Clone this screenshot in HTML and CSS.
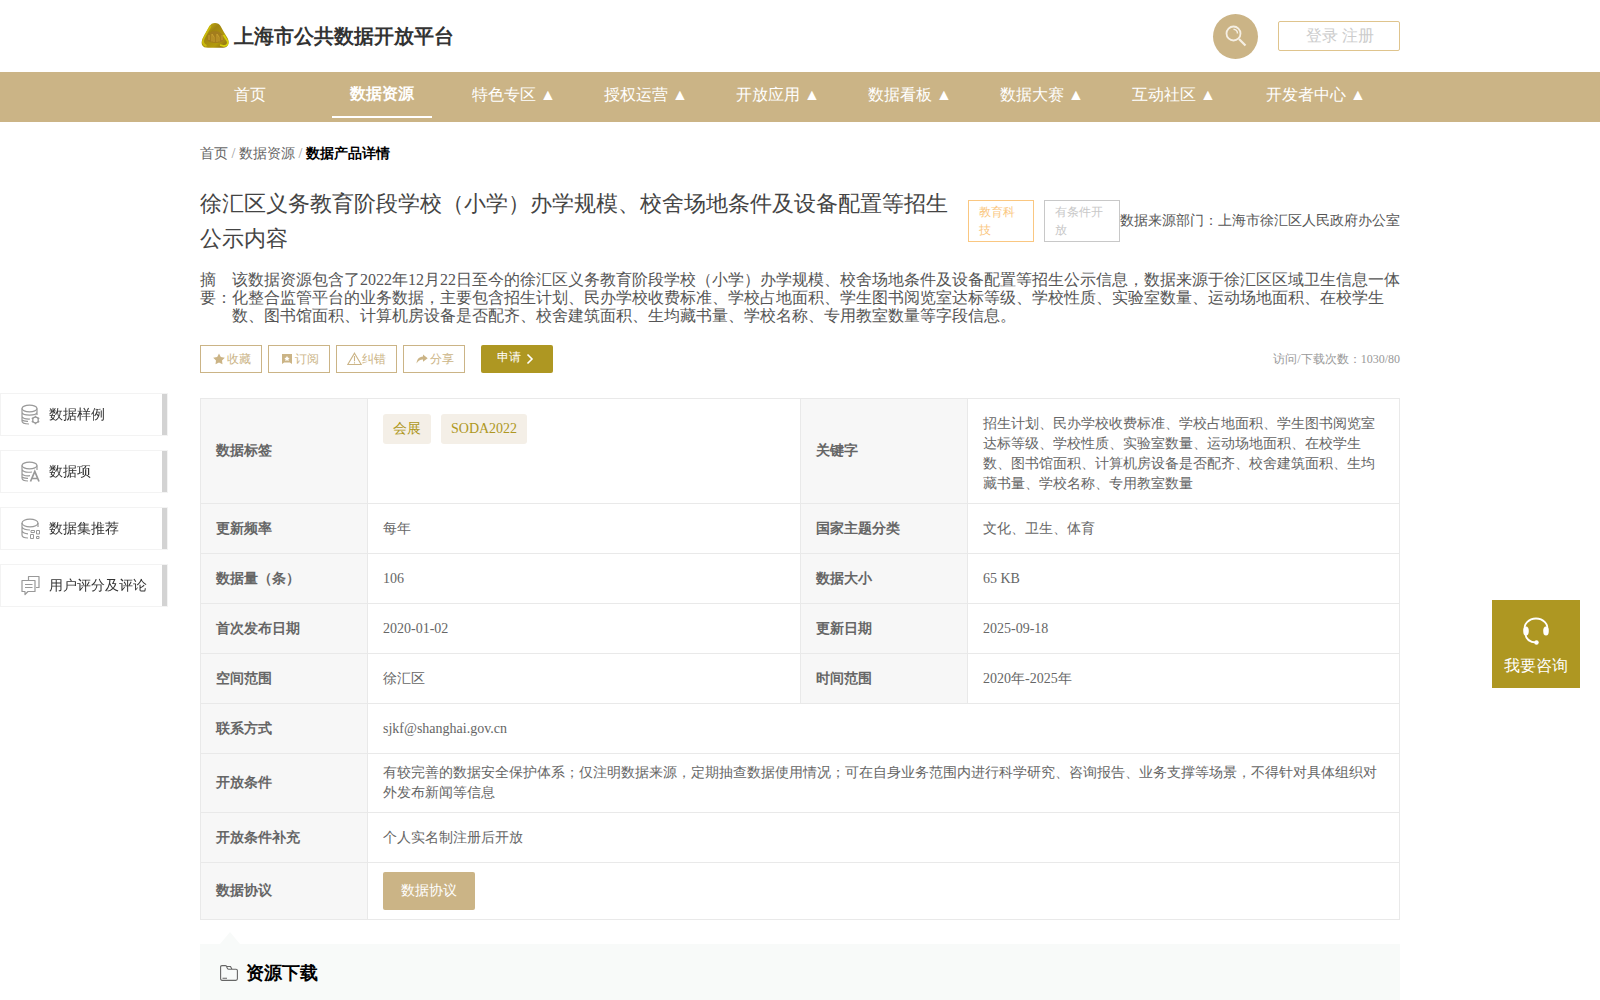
FILE: index.html
```html
<!DOCTYPE html>
<html>
<head>
<meta charset="utf-8">
<title>上海市公共数据开放平台</title>
<link rel="stylesheet" href="styles.css">
</head>
<body>
<header class="header wrap">
  <div class="brand">
    <svg class="brand-logo" width="30" height="28" viewBox="0 0 30 28">
      <defs><linearGradient id="gold" x1="0" y1="0" x2="1" y2="1"><stop offset="0" stop-color="#d9c80c"/><stop offset=".35" stop-color="#a08410"/><stop offset=".7" stop-color="#b39a0c"/><stop offset="1" stop-color="#7d5a14"/></linearGradient></defs>
      <path d="M15 1C17.500 1 19.500 2 20.500 4C22.500 8 25 12 27.500 16C30 21 28 25.800 23 25.800H8C2 25.800.500 22 2.500 17C5 12 7.500 8 9.500 4.500C10.500 2 12.500 1 15 1Z" fill="url(#gold)"/>
      <path d="M10.500 4C8 9 5.500 12 3.500 17C2 21 4 23 6.500 24" fill="none" stroke="#c9b90c" stroke-width="2"/>
      <path d="M23.500 13L27.500 19C28.500 22 27 24 24 24L20 23" fill="none" stroke="#d6d00a" stroke-width="1.800"/>
      <path d="M7 18C7 6 23 6 24 18C21 22 10 22 7 18Z" fill="#a37d1c"/>
      <path d="M9 18V13M12 19.500V12L14 15V20M17 20V12L19 15V19.500M22 18V13" fill="none" stroke="#c9a22e" stroke-width="1"/>
    </svg>
    <h1 class="brand-name">上海市公共数据开放平台</h1>
  </div>
  <div class="header-tools">
    <button class="search"><svg width="22" height="22" viewBox="0 0 22 22" fill="none" stroke="#f5efe4"><circle cx="8.500" cy="8.500" r="7" stroke-width="1.800"/><path d="M14 14L20.500 20.500" stroke-width="2.200"/><path d="M8.500 4.200A4.300 4.300 0 0 1 12.500 8.500" stroke-width="1.500"/></svg></button>
    <div class="login">登录 注册</div>
  </div>
</header>
<nav class="nav"><ul class="nav-list wrap">
  <li>首页</li><li class="active">数据资源</li><li>特色专区 ▲</li><li>授权运营 ▲</li><li>开放应用 ▲</li><li>数据看板 ▲</li><li>数据大赛 ▲</li><li>互动社区 ▲</li><li>开发者中心 ▲</li>
</ul></nav>
<main class="wrap">
  <div class="crumbs">首页<span class="sep"> / </span>数据资源<span class="sep"> / </span><b>数据产品详情</b></div>
  <div class="title-row">
    <h2 class="title">徐汇区义务教育阶段学校（小学）办学规模、校舍场地条件及设备配置等招生公示内容</h2>
    <span class="badge badge-topic">教育科技</span>
    <span class="badge badge-open">有条件开放</span>
    <span class="source">数据来源部门：上海市徐汇区人民政府办公室</span>
  </div>
  <div class="abstract">
    <span class="abstract-label">摘要：</span>
    <p class="abstract-text">该数据资源包含了2022年12月22日至今的徐汇区义务教育阶段学校（小学）办学规模、校舍场地条件及设备配置等招生公示信息，数据来源于徐汇区区域卫生信息一体化整合监管平台的业务数据，主要包含招生计划、民办学校收费标准、学校占地面积、学生图书阅览室达标等级、学校性质、实验室数量、运动场地面积、在校学生数、图书馆面积、计算机房设备是否配齐、校舍建筑面积、生均藏书量、学校名称、专用教室数量等字段信息。</p>
  </div>
  <div class="actions">
    <button class="act"><svg width="12" height="12" viewBox="0 0 12 12"><path d="M6 .5L7.800 4L11.800 4.700L9 7.500L9.500 11.300L6 9.600L2.500 11.300L3 7.500L.2 4.700L4.200 4Z" fill="currentColor"/></svg><span>收藏</span></button>
    <button class="act"><svg width="12" height="12" viewBox="0 0 12 12"><path fill-rule="evenodd" d="M1 1H11V11L8.800 9.500H3.200L1 11ZM6 3L7 4.700L8.700 5L7.400 6.200L7.700 8L6 7.200L4.300 8L4.600 6.200L3.300 5L5 4.700Z" fill="currentColor"/></svg><span>订阅</span></button>
    <button class="act act-report"><svg width="15" height="14" viewBox="0 0 15 14" fill="none" stroke="currentColor" stroke-width="1.100"><path d="M7.500 1.200L14.200 12.500H.8ZM7.500 4V9.300M7.500 10.300V11.500"/></svg><span>纠错</span></button>
    <button class="act"><svg width="12" height="12" viewBox="0 0 12 12"><path d="M7 1.500L11.700 5.200L7 8.700V6.600C4 6.600 2 7.800.6 10.500C.8 6.600 3 3.900 7 3.600Z" fill="currentColor"/></svg><span>分享</span></button>
    <button class="apply"><span>申请</span><svg width="8" height="12" viewBox="0 0 8 12" fill="none" stroke="#fff" stroke-width="1.600"><path d="M1.500 1.500L6 6L1.500 10.500"/></svg></button>
    <span class="visits">访问/下载次数：1030/80</span>
  </div>
  <table class="info">
    <colgroup><col class="c-label"><col class="c-value"><col class="c-label"><col></colgroup>
    <tr class="r-tags"><th>数据标签</th><td class="tags-cell"><span class="tag">会展</span><span class="tag">SODA2022</span></td><th>关键字</th><td class="keywords">招生计划、民办学校收费标准、学校占地面积、学生图书阅览室达标等级、学校性质、实验室数量、运动场地面积、在校学生数、图书馆面积、计算机房设备是否配齐、校舍建筑面积、生均藏书量、学校名称、专用教室数量</td></tr>
    <tr><th>更新频率</th><td>每年</td><th>国家主题分类</th><td>文化、卫生、体育</td></tr>
    <tr><th>数据量（条）</th><td>106</td><th>数据大小</th><td>65 KB</td></tr>
    <tr><th>首次发布日期</th><td>2020-01-02</td><th>更新日期</th><td>2025-09-18</td></tr>
    <tr><th>空间范围</th><td>徐汇区</td><th>时间范围</th><td>2020年-2025年</td></tr>
    <tr><th>联系方式</th><td colspan="3">sjkf@shanghai.gov.cn</td></tr>
    <tr class="r-terms"><th>开放条件</th><td colspan="3">有较完善的数据安全保护体系；仅注明数据来源，定期抽查数据使用情况；可在自身业务范围内进行科学研究、咨询报告、业务支撑等场景，不得针对具体组织对外发布新闻等信息</td></tr>
    <tr><th>开放条件补充</th><td colspan="3">个人实名制注册后开放</td></tr>
    <tr class="r-deal"><th>数据协议</th><td colspan="3"><button class="deal">数据协议</button></td></tr>
  </table>
  <section class="download">
    <svg width="18" height="16" viewBox="0 0 18 16" fill="none" stroke="#666" stroke-width="1.100"><path d="M.6 13.500V2Q.6.600 2 .6H5.500Q6.500.600 7 2.500Q7.500 4.200 8.500 4.200H16Q17.400 4.200 17.400 5.600V13.800Q17.400 15.400 15.800 15.400H2.200Q.6 15.400.6 13.500M6.500 1.500H10.500L12 4.200M2.500 13.300H7"/></svg>
    <h3>资源下载</h3>
  </section>
</main>
<aside class="side">
  <a class="side-item"><svg width="20" height="22" viewBox="0 0 20 22"><ellipse cx="8.500" cy="4.500" rx="7.500" ry="3.300"/><path d="M1 4.500V17C1 19 4 20 8 20M16 4.500V11M1 8.500C2 12 15 12 16 8.500M1 12.500C2 14.500 5 15.200 9 15M1 16C2 17 4 17.400 7 17.300"/><circle cx="14.500" cy="16" r="2.800"/><path stroke-width="1.500" d="M14.500 11.800V13M14.500 19V20.200M10.800 14L12 14.600M17 17.500L18.200 18M10.800 18L12 17.400M17 14.600L18.200 14"/></svg>数据样例</a>
  <a class="side-item"><svg width="20" height="22" viewBox="0 0 20 22"><ellipse cx="8.500" cy="4.500" rx="7.500" ry="3.300"/><path d="M1 4.500V17C1 19 4 20 7 20M16 4.500V9M1 8.500C2 11 7 11.500 11 11M1 12.500C2 14.500 5 15.200 9 14.700M1 16C2 17 4 17.400 7 17.300"/><path stroke-width="1.700" d="M9.500 20.500L13.800 10.500L18 20.500M11 17.500H17"/></svg>数据项</a>
  <a class="side-item"><svg width="20" height="22" viewBox="0 0 20 22"><ellipse cx="9" cy="5" rx="8" ry="3.800"/><path d="M1 5V17C1 19 3 20 7 20M17 5V9M1 9C2 11 5 12 9 12M1 13C2 15 4 15.700 7 15.800"/><path stroke-width="1" d="M10 12.500H13.500V14.500H10ZM15.500 12.500H18.500V16H15.500ZM9.500 16.500H12.500V20.500H9.500ZM15.500 18.500H18V20.500H15.500Z"/></svg>数据集推荐</a>
  <a class="side-item"><svg width="20" height="22" viewBox="0 0 20 22"><path stroke-linejoin="round" d="M7.500 5V1.500H18V12.500H15M1 5.500H14V16.500H7L4 19.500V16.500H1ZM4 9.500H11.500M4 12.500H11.500"/></svg>用户评分及评论</a>
</aside>
<a class="consult">
  <svg width="28" height="28" viewBox="0 0 28 28"><path d="M3 14C1 7 7 1.500 14 1.500S27 7 25 14M3 16C4 22 8 25.500 14 25.500" fill="none" stroke="#fff" stroke-width="1.800"/><ellipse cx="4" cy="14" rx="2.800" ry="4.500" fill="#fff"/><ellipse cx="24" cy="14" rx="2.800" ry="4.500" fill="#fff"/><circle cx="14.500" cy="25.500" r="2.200" fill="#fff"/></svg>
  <span>我要咨询</span>
</a>
</body>
</html>
```
FILE: styles.css
```css
* { box-sizing: border-box; margin: 0; padding: 0; }
html { height: 100%; overflow: hidden; }
body { height: 100%; overflow: hidden; font-family: "Liberation Serif", serif; font-size: 14px; line-height: 20px; color: #666; background: #fff; }
button { font-family: inherit; border: 0; background: none; }
svg { flex: none; }
.wrap { width: 1200px; margin: 0 auto; }

.header { height: 72px; display: flex; align-items: center; justify-content: space-between; }
.brand { display: flex; align-items: center; gap: 4px; }
.brand-name { font-size: 20px; line-height: 28px; color: #333; }
.header-tools { display: flex; align-items: center; gap: 20px; }
.search { width: 45px; height: 45px; border-radius: 50%; background: #cbb486; display: flex; align-items: center; justify-content: center; }
.login { width: 122px; height: 30px; padding-left: 1px; border: 1px solid #dfc48d; border-radius: 2px; color: #ccc; font-size: 16px; line-height: 28px; text-align: center; }

.nav { height: 50px; background: #cbb486; color: #fff; font-size: 16px; }
.nav-list { display: flex; gap: 32px; list-style: none; }
.nav-list li { min-width: 100px; height: 46px; line-height: 46px; text-align: center; }
.nav-list li:last-child { padding: 0 10px; }
.nav-list .active { line-height: 44px; font-weight: bold; border-bottom: 2px solid #fff; }

.crumbs { height: 62px; line-height: 64px; }
.crumbs .sep { color: #999; }
.crumbs b { color: #000; }
.title-row { display: flex; align-items: center; height: 74px; }
.title { flex: 1; margin-right: 10px; font-size: 22px; font-weight: normal; line-height: 35px; color: #444; }
.badge { padding: 2px 10px; border: 1px solid; font-size: 12px; line-height: 18px; }
.badge-topic { width: 66px; margin-right: 10px; color: #fac781; }
.badge-open { width: 76px; color: #c8c8c8; }
.source { width: 280px; white-space: nowrap; color: #555; }

.abstract { display: flex; margin-top: 13px; font-size: 16px; line-height: 18px; color: #555; }
.abstract-label { width: 32px; }
.abstract-text { flex: 1; }

.actions { display: flex; align-items: center; gap: 6px; height: 28px; margin-top: 20px; font-size: 12px; }
.act { width: 62px; height: 28px; padding-left: 2px; border: 1px solid #cbb486; color: #cbb486; font-size: 12px; display: flex; align-items: center; justify-content: center; gap: 2px; }
.act-report { width: 61px; padding-left: 0; gap: 0; }
.apply { width: 72px; height: 28px; margin-left: 10px; border-radius: 2px; background: #ae9722; color: #fff; font-size: 12px; display: flex; gap: 5px; padding: 4px 0 0 16px; }
.apply svg { margin-top: 4px; }
.visits { margin-left: auto; color: #999; }

.info { width: 100%; margin-top: 25px; border-collapse: collapse; table-layout: fixed; }
.c-label { width: 167px; }
.c-value { width: 433px; }
.info tr { height: 50px; }
.info .r-tags { height: 105px; }
.info .r-terms { height: 59px; }
.info .r-deal { height: 57px; }
.info th, .info td { border: 1px solid #e9e9e9; padding: 0 15px; text-align: left; vertical-align: middle; }
.info th { background: #f7f7f7; }
.info .tags-cell { vertical-align: top; padding-top: 15px; }
.info .keywords { padding-top: 6px; }
.tag { display: inline-block; height: 30px; line-height: 29px; margin-right: 10px; padding: 0 10px; border-radius: 3px; background: #f4efe7; color: #ae9722; }
.deal { display: block; width: 92px; height: 38px; padding-bottom: 1px; border-radius: 2px; background: #cbb486; color: #fff; font-size: 14px; }

.download { position: relative; display: flex; align-items: center; gap: 8px; height: 58px; margin-top: 24px; padding-left: 20px; background: #f8faf9; }
.download::before { content: ""; position: absolute; left: 20px; top: -12px; border: 10px solid transparent; border-top: 0; border-bottom: 12px solid #f8faf9; }
.download h3 { font-size: 18px; color: #000; }

.side { position: fixed; left: 0; top: 393px; display: flex; flex-direction: column; gap: 14px; }
.side-item { width: 168px; height: 43px; display: flex; align-items: center; gap: 8px; padding-left: 20px; border: 1px solid #f3f3f3; box-shadow: inset -5px 0 #d3d3d3; color: #333; }
.side-item svg { fill: none; stroke: #999; stroke-width: 1.2; }
.consult { position: fixed; right: 20px; top: 600px; width: 88px; height: 88px; background: #ae9722; color: #fff; font-size: 16px; display: flex; flex-direction: column; align-items: center; gap: 11px; padding-top: 17px; }
```
